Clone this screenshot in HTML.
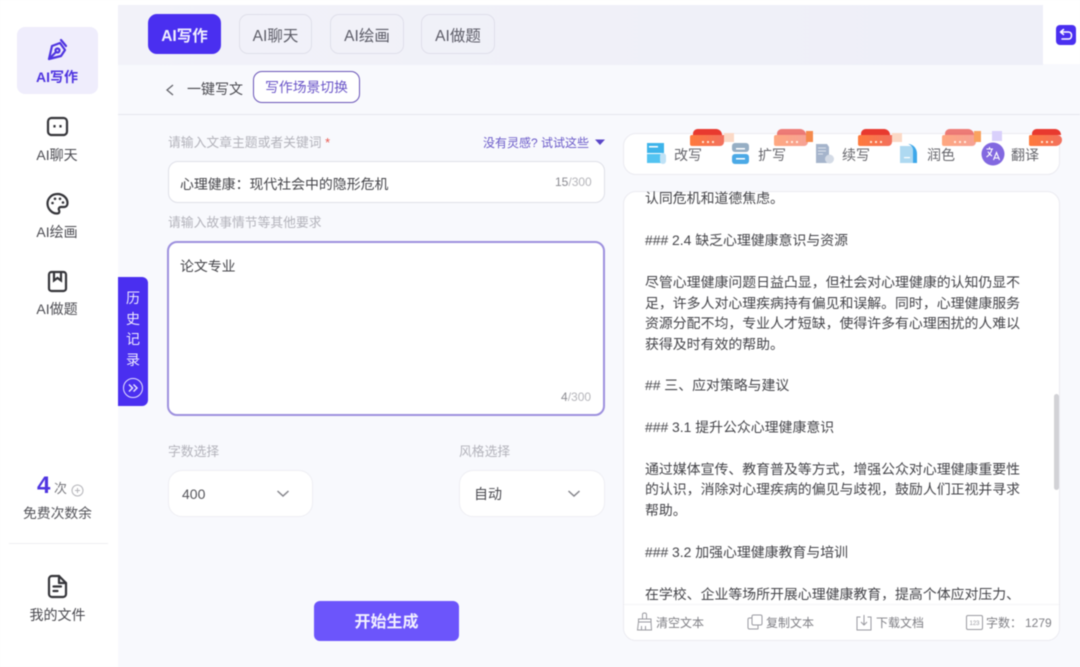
<!DOCTYPE html>
<html lang="zh">
<head>
<meta charset="utf-8">
<style>
html,body{margin:0;padding:0;overflow:hidden;width:1080px;height:667px;background:#f8f9fd}
#p{width:1080px;height:667px;position:relative;overflow:hidden;background:#f8f9fd;font-family:"Liberation Sans","Noto Sans CJK SC",sans-serif;color:#444;filter:blur(.4px)}
.a{position:absolute;white-space:nowrap}
.c{text-align:center}
svg{position:absolute;display:block}
.tab{position:absolute;top:14px;height:40px;line-height:43px;border:1px solid #dfdfea;border-radius:9px;text-align:center;font-size:15.500px;color:#5b5b66;box-sizing:border-box}
.lab{font-size:12.800px;color:#b3b3bb;line-height:16px}
.box{position:absolute;background:#fff;box-sizing:border-box}
.nav{font-size:14px;color:#4c4c52;line-height:18px;left:16px;width:82px;text-align:center}
.l{position:absolute;left:645px;font-size:13.900px;line-height:20px;color:#45454a;white-space:nowrap}
.tl{position:absolute;top:146px;font-size:14px;line-height:18px;color:#66666c;white-space:nowrap}
.rib{position:absolute;top:135px;height:11px;width:34px;background:linear-gradient(90deg,#ff7a3c,#f2705e);border-radius:2px 0 4px 2px}
.rib:before{content:"";position:absolute;left:3px;top:-6px;width:29px;height:6px;background:#e8392f;border-radius:7px 9px 0 0}
.rib:after{content:"";position:absolute;left:12px;top:6px;width:2px;height:2px;background:#ffe3d2;box-shadow:5px 0 #ffe3d2,10px 0 #ffe3d2}
.fade{position:absolute;top:133px;width:10px;height:9px;background:#fbd9c6}
.ft{position:absolute;top:615px;font-size:12px;line-height:16px;color:#808086;white-space:nowrap}
</style>
</head>
<body>
<div id="p">
<div class="a" style="left:0;top:0;width:1080px;height:5px;background:#fff"></div>
<div class="a" style="left:0;top:5px;width:118px;height:662px;background:#fff"></div>
<div class="a" style="left:118px;top:5px;width:925px;height:60px;background:linear-gradient(90deg,#f2f2f9,#eeeff8)"></div>
<div class="a" style="left:1043px;top:5px;width:37px;height:59px;background:#fff"></div>
<div class="a" style="left:118px;top:114px;width:962px;height:1px;background:#e6e7ee"></div>

<!-- sidebar -->
<div class="box" style="left:17px;top:27px;width:81px;height:67px;background:#efedfc;border-radius:8px"></div>
<svg style="left:46px;top:38px" width="22" height="24" viewBox="0 0 22 24" fill="none" stroke="#4f35e0" stroke-width="2.200" stroke-linejoin="round" stroke-linecap="round"><path d="M3 21 L6 8 L14 5 L19 12 L15 18 Z"/><circle cx="11.500" cy="12.500" r="2"/><path d="M3 21 L10 14M15 2 L20 8"/></svg>
<div class="a nav" style="top:68px;font-weight:700;color:#4f35e0">AI写作</div>
<svg style="left:46px;top:116px" width="23" height="22" viewBox="0 0 23 22" fill="none" stroke="#35353a" stroke-width="2.200"><rect x="2" y="2" width="19" height="17" rx="3.500"/><path d="M8.500 9v2.500M14.500 9v2.500"/></svg>
<div class="a nav" style="top:146px">AI聊天</div>
<svg style="left:46px;top:192px" width="23" height="24" viewBox="0 0 23 24" fill="none" stroke="#35353a" stroke-width="2.200"><path d="M11.500 2C5.500 2 1.500 6.500 1.500 11.500C1.500 17 6 21.500 11 21.500C13.500 21.500 13.800 19.500 13 18C12.300 16.500 13.300 15 15 15H18C20.500 15 21.500 13 21.500 11C21.500 6 17 2 11.500 2Z"/><g fill="#35353a" stroke="none"><circle cx="6.500" cy="11" r="1.300"/><circle cx="9" cy="6.800" r="1.300"/><circle cx="14" cy="6.800" r="1.300"/><circle cx="17" cy="10.500" r="1.300"/></g></svg>
<div class="a nav" style="top:223px">AI绘画</div>
<svg style="left:47px;top:270px" width="21" height="23" viewBox="0 0 21 23" fill="none" stroke="#35353a" stroke-width="2.200"><rect x="2" y="2" width="17" height="19" rx="2.500"/><path d="M7 2v8.500l3.500-2.500 3.500 2.500V2"/></svg>
<div class="a nav" style="top:300px">AI做题</div>

<div class="a" style="left:37px;top:472px;font-size:24px;line-height:28px;font-weight:700;color:#4f35e0">4</div>
<div class="a" style="left:54px;top:481px;font-size:13px;line-height:16px;color:#77777d">次</div>
<svg style="left:71px;top:484px" width="13" height="13" viewBox="0 0 13 13" fill="none" stroke="#b5b5ba"><circle cx="6.500" cy="6.500" r="5.500"/><path d="M4 6.500h5M6.500 4v5"/></svg>
<div class="a c" style="left:0;width:115px;top:505px;font-size:13.800px;line-height:17px;color:#55555b">免费次数余</div>
<div class="a" style="left:9px;top:543px;width:99px;height:1px;background:#eeeef1"></div>
<svg style="left:47px;top:574px" width="21" height="25" viewBox="0 0 21 25" fill="none" stroke="#35353a" stroke-width="2.200" stroke-linejoin="round" stroke-linecap="round"><path d="M5 2H12L19 9V20C19 21.700 17.700 23 16 23H5C3.300 23 2 21.700 2 20V5C2 3.300 3.300 2 5 2Z"/><path d="M12 2V9H19M6.500 12.500H14M6.500 17H10.500"/></svg>
<div class="a c" style="left:0;width:115px;top:606px;font-size:14px;line-height:18px;color:#48484e">我的文件</div>

<!-- tabs -->
<div class="tab" style="left:148px;width:73px;background:#4a2ff0;border-color:#4a2ff0;color:#f0eeff;font-weight:700">AI写作</div>
<div class="tab" style="left:239px;width:73px">AI聊天</div>
<div class="tab" style="left:330px;width:74px">AI绘画</div>
<div class="tab" style="left:421px;width:74px">AI做题</div>
<div class="box" style="left:1056px;top:25px;width:20px;height:20px;background:#4a2ff0;border-radius:4px"></div>
<svg style="left:1056px;top:25px" width="20" height="20" viewBox="0 0 20 20" fill="none" stroke="#fff" stroke-width="1.500" stroke-linecap="round" stroke-linejoin="round"><path d="M7.500 4.500L4.500 7L7.500 9.500M4.500 7H12.500C14.500 7 15.500 8.500 15.500 10.500C15.500 12.500 14.500 14 12.500 14H6"/></svg>

<!-- subheader -->
<svg style="left:164px;top:83px" width="12" height="14" viewBox="0 0 12 14" fill="none" stroke="#66666c" stroke-width="1.300"><path d="M9 2L3 7L9 12"/></svg>
<div class="a" style="left:187px;top:80px;font-size:14px;line-height:18px;color:#48484e">一键写文</div>
<div class="box" style="left:253px;top:71px;width:107px;height:32px;background:#fff;border:1px solid #6a55b8;border-radius:9px;text-align:center;line-height:32px;font-size:13.800px;color:#6a55c8">写作场景切换</div>

<!-- left form -->
<div class="a lab" style="left:168px;top:135px">请输入文章主题或者关键词 <span style="color:#e8594f">*</span></div>
<div class="a" style="left:483px;top:135px;font-size:12px;line-height:16px;color:#6a5ac8">没有灵感? 试试这些</div>
<svg style="left:595px;top:139px" width="10" height="7" viewBox="0 0 10 7"><path d="M0 0.500H10L5 6Z" fill="#5a46c8"/></svg>
<div class="box" style="left:168px;top:161px;width:437px;height:42px;border:1px solid #dfe0e8;border-radius:10px"></div>
<div class="a" style="left:180px;top:175px;font-size:13.900px;line-height:18px;color:#45454a">心理健康：现代社会中的隐形危机</div>
<div class="a" style="left:555px;top:175px;font-size:12px;line-height:15px;color:#8a8a90">15<span style="color:#b5b5ba">/300</span></div>
<div class="a lab" style="left:168px;top:215px">请输入故事情节等其他要求</div>
<div class="box" style="left:167px;top:241px;width:438px;height:175px;border:2px solid #9d90de;border-radius:10px"></div>
<div class="a" style="left:180px;top:257px;font-size:13.900px;line-height:18px;color:#45454a">论文专业</div>
<div class="a" style="left:561px;top:390px;font-size:12px;line-height:15px;color:#8a8a90">4<span style="color:#b5b5ba">/300</span></div>

<div class="a lab" style="left:168px;top:444px">字数选择</div>
<div class="a lab" style="left:459px;top:444px">风格选择</div>
<div class="box" style="left:168px;top:470px;width:145px;height:47px;border:1px solid #eeeef3;border-radius:14px"></div>
<div class="box" style="left:459px;top:470px;width:146px;height:47px;border:1px solid #eeeef3;border-radius:14px"></div>
<div class="a" style="left:182px;top:486px;font-size:14px;line-height:17px;color:#55555b">400</div>
<div class="a" style="left:474px;top:486px;font-size:14px;line-height:17px;color:#48484e">自动</div>
<svg style="left:276px;top:489px" width="14" height="10" viewBox="0 0 14 10" fill="none" stroke="#85858b" stroke-width="1.500"><path d="M1.500 2L7 7L12.500 2"/></svg>
<svg style="left:567px;top:489px" width="14" height="10" viewBox="0 0 14 10" fill="none" stroke="#85858b" stroke-width="1.500"><path d="M1.500 2L7 7L12.500 2"/></svg>
<div class="box" style="left:314px;top:601px;width:145px;height:40px;background:#6c55fb;border-radius:6px;text-align:center;line-height:43px;font-size:16px;font-weight:700;color:#f2f0ff">开始生成</div>

<!-- history -->
<div class="box" style="left:118px;top:277px;width:30px;height:129px;background:#4a2ff0;border-radius:0 6px 6px 0"></div>
<div class="a c" style="left:118px;width:30px;top:288px;font-size:14px;line-height:20.700px;color:#eeeaff;white-space:normal">历<br>史<br>记<br>录</div>
<svg style="left:122px;top:377px" width="22" height="22" viewBox="0 0 22 22" fill="none" stroke="#e6e1ff"><circle cx="11" cy="11" r="9.500"/><path d="M7 7.500L10.500 11L7 14.500M11.500 7.500L15 11L11.500 14.500" stroke-width="1.500"/></svg>

<!-- toolbar -->
<div class="box" style="left:623px;top:133px;width:437px;height:42px;border:1px solid #ebebf1;border-radius:13px"></div>
<div class="rib" style="left:690px"></div><div class="fade" style="left:724px"></div>
<div class="rib" style="left:774px;opacity:.65"></div><div class="a" style="left:806px;top:131px;width:7px;height:11px;background:#f58a4c"></div>
<div class="rib" style="left:858px"></div><div class="fade" style="left:892px"></div>
<div class="rib" style="left:942px;opacity:.65"></div><div class="a" style="left:974px;top:131px;width:7px;height:11px;background:#f9a25f"></div>
<div class="a" style="left:992px;top:131px;width:10px;height:10px;background:#d9d0fb"></div>
<div class="rib" style="left:1029px;width:33px;border-radius:2px 6px 8px 2px"></div>

<svg style="left:646px;top:143px" width="22" height="22" viewBox="0 0 22 22"><rect x="1" y="0" width="17" height="10" fill="#3eb4ea"/><rect x="3" y="3" width="9" height="1.500" fill="#fff"/><rect x="1" y="11" width="17" height="9" fill="#53c3f1"/><rect x="14" y="10" width="6" height="11" rx="3" fill="#bfe2f6"/></svg>
<div class="tl" style="left:674px">改写</div>
<svg style="left:731px;top:143px" width="20" height="22" viewBox="0 0 20 22"><rect x="1" y="0" width="17" height="9" rx="3" fill="#96aec4"/><rect x="5" y="5" width="9" height="1.500" fill="#fff"/><rect x="1" y="11" width="17" height="10" rx="3" fill="#4ba9e6"/><rect x="5" y="15" width="9" height="1.500" fill="#fff"/></svg>
<div class="tl" style="left:758px">扩写</div>
<svg style="left:815px;top:144px" width="20" height="20" viewBox="0 0 20 20"><path d="M1 0H12L14 3V19H1Z" fill="#a5b4cb"/><path d="M3 4H11M3 7H11M3 10H8" stroke="#dbe2ec"/><circle cx="14.500" cy="15" r="4.500" fill="#d4dbe6"/></svg>
<div class="tl" style="left:842px">续写</div>
<svg style="left:899px;top:144px" width="20" height="20" viewBox="0 0 20 20"><path d="M1 2H11C15 2 17.500 5 18 9V19H1Z" fill="#aed9f1"/><path d="M9 0C14 0 18 4 18 10V19H14V6C14 3 12 1 9 0Z" fill="#3ea8ea"/><rect x="5" y="13" width="6" height="1.200" fill="#fff"/></svg>
<div class="tl" style="left:927px">润色</div>
<svg style="left:981px;top:142px" width="24" height="24" viewBox="0 0 24 24"><circle cx="12" cy="12" r="11.500" fill="#8268e0"/><path d="M5.500 7H12M8.500 5V7M11 7C10 11 8 13.500 5.500 15M7 9.500C8 12 9.500 13 11 14M12.500 18L15.500 10.500L18.500 18M13.500 16H17.500" fill="none" stroke="#fff" stroke-width="1.100"/></svg>
<div class="tl" style="left:1011px">翻译</div>

<!-- content panel -->
<div class="box" style="left:623px;top:191px;width:437px;height:450px;border:1px solid #ebebf1;border-radius:13px;overflow:hidden"></div>
<div class="l" style="top:188px">认同危机和道德焦虑。</div>
<div class="l" style="top:230px">### 2.4 缺乏心理健康意识与资源</div>
<div class="l" style="top:272px">尽管心理健康问题日益凸显，但社会对心理健康的认知仍显不</div>
<div class="l" style="top:293px">足，许多人对心理疾病持有偏见和误解。同时，心理健康服务</div>
<div class="l" style="top:313px">资源分配不均，专业人才短缺，使得许多有心理困扰的人难以</div>
<div class="l" style="top:334px">获得及时有效的帮助。</div>
<div class="l" style="top:375px">## 三、应对策略与建议</div>
<div class="l" style="top:417px">### 3.1 提升公众心理健康意识</div>
<div class="l" style="top:459px">通过媒体宣传、教育普及等方式，增强公众对心理健康重要性</div>
<div class="l" style="top:479px">的认识，消除对心理疾病的偏见与歧视，鼓励人们正视并寻求</div>
<div class="l" style="top:500px">帮助。</div>
<div class="l" style="top:542px">### 3.2 加强心理健康教育与培训</div>
<div class="l" style="top:584px">在学校、企业等场所开展心理健康教育，提高个体应对压力、</div>
<div class="a" style="left:1054px;top:394px;width:5px;height:96px;background:#d2d2d6;border-radius:3px"></div>
<div class="box" style="left:624px;top:604px;width:435px;height:36px;border-top:1px solid #f4f4f7;border-radius:0 0 12px 12px"></div>

<svg style="left:636px;top:612px" width="18" height="20" viewBox="0 0 18 20" fill="none" stroke="#9a9aa0"><path d="M6.500 7V2.500C6.500 1.500 7.500 1 8.500 1S10.500 1.500 10.500 2.500V7M2.500 7H15V10H2.500ZM2.500 10L1.500 18H15.500L15 10M5.500 14V18M9.500 14V18"/></svg>
<div class="ft" style="left:656px">清空文本</div>
<svg style="left:747px;top:614px" width="16" height="16" viewBox="0 0 16 16" fill="none" stroke="#9a9aa0"><rect x="5" y="1" width="10" height="10" rx="1.500"/><path d="M5 4H2.500C1.500 4 1 4.500 1 5.500V13.500C1 14.500 1.500 15 2.500 15H10.500C11.500 15 11 14.500 11 13.500V11"/></svg>
<div class="ft" style="left:766px">复制文本</div>
<svg style="left:856px;top:614px" width="16" height="17" viewBox="0 0 16 17" fill="none" stroke="#9a9aa0"><path d="M4.500 3H1V16H15V3H11.500M8 1V10.500M5 8L8 11L11 8"/></svg>
<div class="ft" style="left:876px">下载文档</div>
<svg style="left:966px;top:615px" width="17" height="15" viewBox="0 0 17 15" fill="none" stroke="#9a9aa0"><rect x="0.500" y="0.500" width="16" height="14" rx="1.500"/><text x="8.500" y="10" font-size="6" text-anchor="middle" fill="#9a9aa0" stroke="none" font-family="Liberation Sans">123</text></svg>
<div class="ft" style="left:986px">字数：</div>
<div class="ft" style="left:1025px">1279</div>
</div>
</body>
</html>
